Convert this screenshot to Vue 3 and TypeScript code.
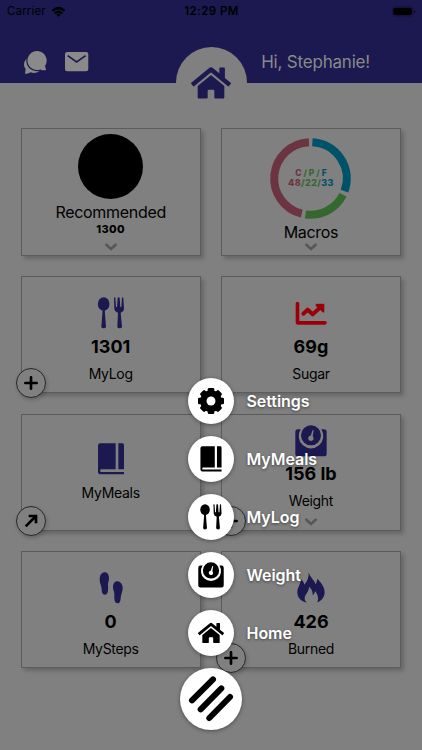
<script setup lang="ts">
interface Glyph {
  box: string
  body: string
}

interface Tile {
  id: string
  label: string
  value?: string
  icon: string
  tone?: string
  badge?: 'plus' | 'arrow'
  chevron?: boolean
}

interface MenuItem {
  label: string
  icon: string
}

const utensils =
  '<ellipse cx="26" cy="21" rx="17.5" ry="20"/><path d="M23 37h6l4 52q0 5-7 5t-7-5z"/>' +
  '<path d="M57 2q2-2 4 0l2 28h3l2-28q3-3 6 0l2 28h3l2-28q2-2 4 0l2 33q0 8-10 12l4 42q0 5-7 5t-7-5l2-42q-11-4-11-12z"/>'

const book =
  '<path d="M16 1h46v78H18q-2 0-2 2v6h71v7H17q-8 0-8-8V8q0-7 7-7z"/><path d="M70 1h12q5 0 5 5v73H70z"/>'

const scale =
  '<path fill-rule="evenodd" d="M9 13h8a37 37 0 1 0 62 0h8q8 0 8 8v65q0 8-8 8H9q-8 0-8-8V21q0-8 8-8z"/>' +
  '<path fill-rule="evenodd" d="M48 1a30 30 0 1 0 0 60a30 30 0 1 0 0-60zM56 16l-3 18a8 8 0 1 1-6-2l6-17z"/>'

const home =
  '<path d="M280.37 148.26L96 300.11V464a16 16 0 0 0 16 16l112.06-.29a16 16 0 0 0 15.92-16V368a16 16 0 0 1 16-16h64a16 16 0 0 1 16 16v95.64a16 16 0 0 0 16 16.05L464 480a16 16 0 0 0 16-16V300L295.67 148.26a12.19 12.19 0 0 0-15.3 0zM571.6 251.47L488 182.56V44.05a12 12 0 0 0-12-12h-56a12 12 0 0 0-12 12v72.61L318.47 43a48 48 0 0 0-61 0L4.34 251.47a12 12 0 0 0-1.6 16.9l25.5 31A12 12 0 0 0 45.15 301l235.22-193.74a12.19 12.19 0 0 1 15.3 0L530.9 301a12 12 0 0 0 16.9-1.6l25.5-31a12 12 0 0 0-1.7-16.93z"/>'

const teeth = [0, 45, 90, 135]
  .map((a) => `<rect x="36" y="0" width="24" height="96" rx="5" transform="rotate(${a} 48 48)"/>`)
  .join('')

const gear =
  '<mask id="gear-hole"><rect width="96" height="96" fill="#fff"/><circle cx="48" cy="48" r="16.5" fill="#000"/></mask>' +
  `<g mask="url(#gear-hole)"><circle cx="48" cy="48" r="40"/>${teeth}</g>`

const chart =
  '<path d="M7.5 19.5V77.5H90" fill="none" stroke="currentColor" stroke-width="11" stroke-linecap="round" stroke-linejoin="round"/>' +
  '<path d="M25 50L38 38L53 52L75 32" fill="none" stroke="currentColor" stroke-width="12" stroke-linecap="round" stroke-linejoin="round"/>' +
  '<path d="M65 20h20q3 0 3 3v21q-1 5-5 2L62 26q-2-5 3-6z"/>'

const steps =
  '<path d="M29 1c9 0 13 8 13 18c0 9-4 14-3 22c1 10 1 27-9 27c-11 0-9-13-11-23c-2-9-5-13-5-23C14 10 20 1 29 1z"/>' +
  '<path d="M67 28c-9 0-13 8-13 18c0 8 4 12 4 21c0 10-1 27 9 27c11 0 9-13 11-23c2-9 5-13 5-23C83 37 76 28 67 28z"/>'

const fire =
  '<path d="M41 1C44 15 57 23 62 37C65 31 66 26 67 20C78 31 89 45 89 61C89 75 80 87 67 91C72 78 68 67 60 57C59 63 57 67 53 70C54 59 50 51 42 44C43 59 29 67 29 79C29 84 31 88 35 92C18 89 7 77 7 61C7 47 16 39 18 22C23 27 27 31 28 38C37 29 42 16 41 1z"/>'

const glyphs: Record<string, Glyph> = {
  utensils: { box: '0 0 96 96', body: utensils },
  book: { box: '0 0 96 96', body: book },
  scale: { box: '0 0 96 96', body: scale },
  home: { box: '0 -32 576 576', body: home },
  gear: { box: '0 0 96 96', body: gear },
  chart: { box: '0 0 96 96', body: chart },
  steps: { box: '0 0 96 96', body: steps },
  fire: { box: '0 0 96 96', body: fire },
}

const tiles: Tile[] = [
  { id: 'log', label: 'MyLog', value: '1301', icon: 'utensils', badge: 'plus' },
  { id: 'sugar', label: 'Sugar', value: '69g', icon: 'chart', tone: 'red' },
  { id: 'meals', label: 'MyMeals', icon: 'book', badge: 'arrow' },
  { id: 'weight', label: 'Weight', value: '156 lb', icon: 'scale', badge: 'plus', chevron: true },
  { id: 'steps', label: 'MySteps', value: '0', icon: 'steps' },
  { id: 'burned', label: 'Burned', value: '426', icon: 'fire', badge: 'plus' },
]

const menu: MenuItem[] = [
  { label: 'Settings', icon: 'gear' },
  { label: 'MyMeals', icon: 'book' },
  { label: 'MyLog', icon: 'utensils' },
  { label: 'Weight', icon: 'scale' },
  { label: 'Home', icon: 'home' },
]

const macros = [
  { name: 'fat', color: '#005268', from: 3, to: 110.5 },
  { name: 'protein', color: '#34682f', from: 116.5, to: 188 },
  { name: 'carbs', color: '#6c3340', from: 194, to: 357.5 },
]

function arc(from: number, to: number): string {
  const r = 36.3
  const at = (deg: number) => {
    const t = (deg * Math.PI) / 180
    return `${(40.5 + r * Math.sin(t)).toFixed(2)} ${(40.5 - r * Math.cos(t)).toFixed(2)}`
  }
  return `M${at(from)}A${r} ${r} 0 ${to - from > 180 ? 1 : 0} 1 ${at(to)}`
}
</script>

<template>
  <main class="screen">
    <header class="top">
      <div class="status">
        <div class="carrier">
          <span>Carrier</span>
          <svg class="wifi" viewBox="0 0 48 34">
            <path d="M2 12Q24-8 46 12l-5 6Q24 3 7 18z" />
            <path d="M10 20Q24 8 38 20l-5 6q-9-8-18 0z" />
            <path d="M17 27q7-5 14 0l-7 7z" />
          </svg>
        </div>
        <div class="clock">12:29 PM</div>
        <svg class="battery" viewBox="0 0 72 33">
          <rect x="1" y="1" width="62" height="31" rx="9" fill="none" stroke="#131238" stroke-width="2" />
          <rect x="4" y="5" width="56" height="23" rx="6" />
          <path d="M67 12q5 5 0 10z" />
        </svg>
      </div>
      <div class="bar">
        <div class="shortcuts">
          <svg class="chat" viewBox="0 0 70 70">
            <path d="M20 15C-3 24-3 46 5 54L3 69q11 1 17-4q16 5 28-5z" />
            <path class="front" d="M41 0a29 29 0 1 0 9 56q7 4 17 2l-3-13A29 29 0 0 0 41 0z" />
          </svg>
          <svg class="mail" viewBox="0 0 70 58">
            <rect width="70" height="58" rx="7" />
            <path d="M8 11L35 30L62 11" fill="none" stroke="#1b194f" stroke-width="5" />
          </svg>
        </div>
        <div class="hello">Hi, Stephanie!</div>
      </div>
      <div class="crest">
        <svg :viewBox="glyphs.home.box" v-html="glyphs.home.body" />
      </div>
    </header>

    <section class="grid">
      <article class="card">
        <div class="pie"></div>
        <div class="title">Recommended</div>
        <div class="amount">1300</div>
        <svg class="chev" viewBox="0 0 36 24"><path d="M4 5L18 18L32 5" /></svg>
      </article>

      <article class="card macro">
        <div class="donut">
          <svg viewBox="0 0 81 81">
            <path v-for="m in macros" :key="m.name" :d="arc(m.from, m.to)" :stroke="m.color" fill="none" stroke-width="8" />
          </svg>
          <div class="legend">
            <div class="names"><span class="c">C</span><span class="p"> / P / </span><span class="f">F</span></div>
            <div class="nums"><span class="c">48</span><span class="p">/22/</span><span class="f">33</span></div>
          </div>
        </div>
        <div class="title">Macros</div>
        <svg class="chev" viewBox="0 0 36 24"><path d="M4 5L18 18L32 5" /></svg>
      </article>

      <article v-for="t in tiles" :key="t.id" class="card tile" :class="[t.tone, t.id]">
        <svg class="icon" :viewBox="glyphs[t.icon].box" v-html="glyphs[t.icon].body" />
        <div v-if="t.value" class="value">{{ t.value }}</div>
        <div class="label">{{ t.label }}</div>
        <svg v-if="t.chevron" class="chev" viewBox="0 0 36 24"><path d="M4 5L18 18L32 5" /></svg>
        <div v-if="t.badge" class="badge">
          <svg v-if="t.badge === 'plus'" viewBox="0 0 42 42"><path d="M21 4V38M4 21H38" stroke-linecap="round" /></svg>
          <svg v-else viewBox="0 0 42 42"><path d="M5 37L36 6M14 6H36V28" /></svg>
        </div>
      </article>
    </section>

    <nav class="menu">
      <div v-for="m in menu" :key="m.label" class="entry">
        <div class="dot"><svg :viewBox="glyphs[m.icon].box" v-html="glyphs[m.icon].body" /></div>
        <span class="name">{{ m.label }}</span>
      </div>
      <div class="main">
        <svg viewBox="0 0 186 186">
          <path d="M36 97L99 34M62 124L124 61M88 150L150 87" />
        </svg>
      </div>
    </nav>
  </main>
</template>

<style>
body {
  background: #808080;
  overflow: hidden;
}
</style>

<style scoped>
.screen {
  position: relative;
  width: 422px;
  height: 750px;
  overflow: hidden;
  background: #808080;
  color: #000;
  font-family: Inter, Roboto, sans-serif;
}
svg {
  display: block;
  fill: currentColor;
  overflow: visible;
}
.top {
  position: relative;
  height: 82.5px;
  background: #1b194f;
}
.status {
  display: grid;
  grid-template-columns: 1fr auto 1fr;
  align-items: center;
  height: 22px;
  padding: 0 6px 0 7px;
}
.carrier {
  display: flex;
  align-items: center;
  gap: 5px;
  font-size: 11.5px;
  letter-spacing: 0.15px;
}
.wifi {
  width: 15px;
  height: 11px;
}
.clock {
  font-size: 11.5px;
  font-weight: 600;
  letter-spacing: 0.45px;
}
.battery {
  justify-self: end;
  width: 24px;
  height: 11px;
}
.bar {
  display: flex;
  justify-content: space-between;
  align-items: center;
  height: 80px;
  padding: 0 52px 0 24px;
  color: #8a8a8a;
}
.shortcuts {
  display: flex;
  align-items: center;
  gap: 18px;
}
.chat {
  width: 23px;
  height: 23px;
}
.front {
  stroke: #1b194f;
  stroke-width: 7;
  paint-order: stroke;
}
.mail {
  width: 23.3px;
  height: 19.3px;
}
.hello {
  font-size: 17px;
  letter-spacing: -0.2px;
}
.crest {
  position: absolute;
  left: 175.5px;
  top: 47px;
  display: flex;
  align-items: center;
  justify-content: center;
  width: 71px;
  height: 71px;
  border-radius: 50%;
  background: #808080;
  color: #1b194f;
}
.crest svg {
  width: 40px;
  height: 40px;
}
.grid {
  display: grid;
  grid-template-columns: 180px 180px;
  grid-template-rows: 127.5px repeat(3, 117px);
  gap: 20.5px 20.3px;
  padding: 45.5px 21px 0 20.7px;
}
.card {
  position: relative;
  display: flex;
  flex-direction: column;
  align-items: center;
  box-sizing: border-box;
  border: 1px solid #5b5b5b;
  background: #808080;
  box-shadow: 3px 3px 4px rgba(0, 0, 0, 0.2);
  white-space: nowrap;
}
.pie {
  width: 65px;
  height: 65px;
  margin-top: 4.7px;
  border-radius: 50%;
  background: #000;
}
.title {
  height: 22px;
  margin-top: 2px;
  font-size: 16px;
  line-height: 22px;
  letter-spacing: -0.3px;
}
.amount {
  height: 12px;
  font-size: 11px;
  font-weight: 800;
  line-height: 12px;
  letter-spacing: 0.4px;
}
.chev {
  position: absolute;
  bottom: 3.5px;
  left: 83px;
  width: 12px;
  height: 8px;
  fill: none;
  stroke: #575757;
  stroke-width: 8;
  stroke-linecap: round;
}
.donut {
  display: grid;
  width: 81px;
  height: 81px;
  margin-top: 8.7px;
}
.donut > * {
  grid-area: 1 / 1;
}
.legend {
  align-self: center;
  margin-top: -1px;
  font-weight: 800;
  text-align: center;
}
.names {
  font-size: 8.6px;
  line-height: 10px;
  white-space: pre;
}
.nums {
  font-size: 9px;
  line-height: 10px;
  letter-spacing: 0.4px;
}
.c {
  color: #6c3340;
}
.p {
  color: #34682f;
}
.f {
  color: #005268;
}
.tile {
  padding-top: 20px;
}
.icon {
  width: 32px;
  height: 32px;
  color: #1b194f;
}
.red .icon {
  color: #9b0009;
}
.value {
  height: 24px;
  margin-top: 5.5px;
  font-size: 18px;
  font-weight: 700;
  line-height: 24px;
}
.label {
  height: 20px;
  margin-top: 5px;
  font-size: 14px;
  line-height: 20px;
  letter-spacing: -0.3px;
}
.meals {
  padding-top: 28.5px;
}
.meals .label {
  margin-top: 7.5px;
}
.weight {
  padding-top: 10px;
}
.badge {
  position: absolute;
  left: -6px;
  bottom: -6px;
  display: flex;
  align-items: center;
  justify-content: center;
  box-sizing: border-box;
  width: 30px;
  height: 30px;
  border: 1px solid #292929;
  border-radius: 50%;
  background: #808080;
  box-shadow: 1px 2px 4px rgba(0, 0, 0, 0.2);
}
.badge svg {
  width: 14px;
  height: 14px;
  fill: none;
  stroke: #000;
  stroke-width: 8;
}
.menu {
  position: absolute;
  left: 180px;
  top: 378px;
  display: flex;
  flex-direction: column;
  gap: 12px;
}
.entry {
  display: flex;
  align-items: center;
  gap: 12.5px;
  height: 46px;
  padding-left: 8px;
}
.dot {
  display: flex;
  align-items: center;
  justify-content: center;
  width: 46px;
  height: 46px;
  border-radius: 50%;
  background: #fff;
  box-shadow: 0 1px 4px rgba(0, 0, 0, 0.4);
}
.dot svg {
  width: 26px;
  height: 26px;
}
.name {
  color: #fff;
  font-size: 16px;
  font-weight: 600;
  letter-spacing: -0.05px;
  text-shadow: 0 1px 3px rgba(0, 0, 0, 0.5);
}
.main {
  width: 62px;
  height: 62px;
  border-radius: 50%;
  background: #fff;
  box-shadow: 0 1px 4px rgba(0, 0, 0, 0.4);
}
.main svg {
  width: 62px;
  height: 62px;
  fill: none;
  stroke: #000;
  stroke-width: 18;
  stroke-linecap: round;
}
</style>
